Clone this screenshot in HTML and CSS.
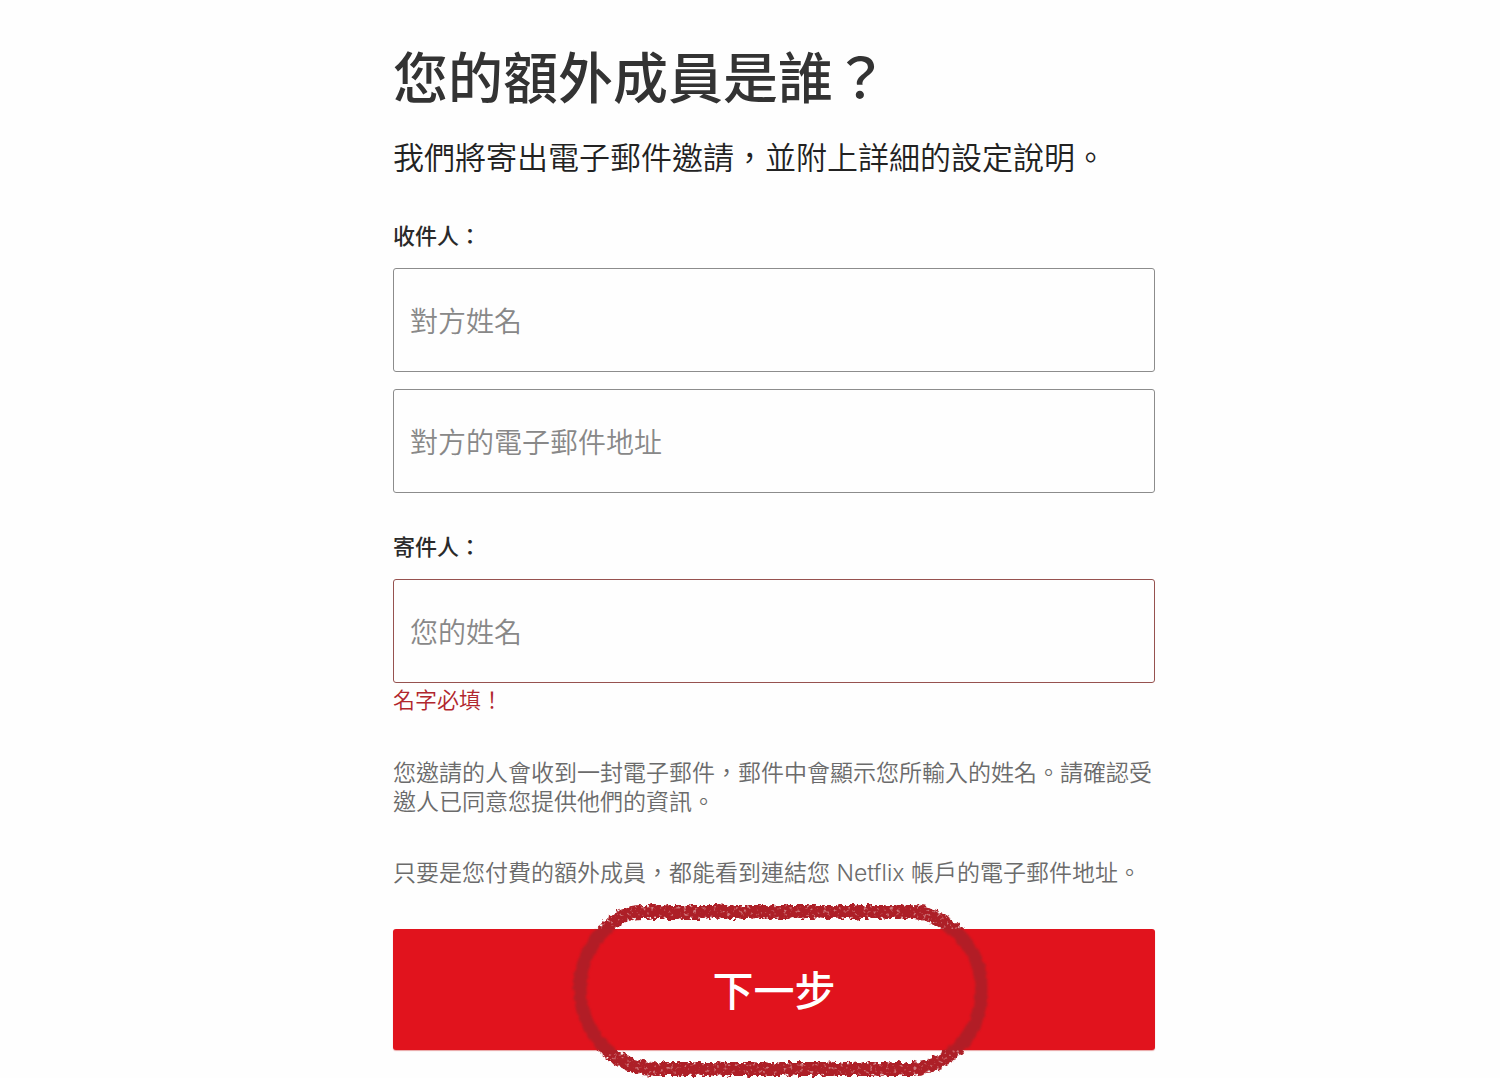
FILE: index.html
```html
<!DOCTYPE html>
<html lang="zh-Hant">
<head>
<meta charset="utf-8">
<meta name="viewport" content="width=device-width, initial-scale=1">
<title>您的額外成員是誰？</title>
<link rel="stylesheet" href="styles.css">
</head>
<body>
<main class="page">
  <form class="invite" novalidate>
    <h1 class="title">您的額外成員是誰？</h1>
    <p class="subtitle">我們將寄出電子郵件邀請，並附上詳細的設定說明。</p>

    <section class="group">
      <label class="group-label" for="to-name">收件人：</label>
      <input class="field" id="to-name" type="text" placeholder="對方姓名">
      <input class="field" type="email" placeholder="對方的電子郵件地址" aria-label="對方的電子郵件地址">
    </section>

    <section class="group">
      <label class="group-label" for="from-name">寄件人：</label>
      <input class="field field-invalid" id="from-name" type="text" placeholder="您的姓名" aria-invalid="true" aria-describedby="from-error">
    </section>
    <p class="error" id="from-error">名字必填！</p>

    <p class="note">您邀請的人會收到一封電子郵件，郵件中會顯示您所輸入的姓名。請確認受邀人已同意您提供他們的資訊。</p>
    <p class="note">只要是您付費的額外成員，都能看到連結您 Netflix 帳戶的電子郵件地址。</p>

    <div class="action">
      <button class="next" type="button">下一步</button>
      <svg class="marker" viewBox="0 0 430 181" aria-hidden="true">
        <defs>
          <path id="ring" d="M73 15H346C362 16 370 20 378 26C404 44 414 66 414 90C414 114 409 136 386 155C374 165 364 170 346 172H85C66 171 54 165 40 153C22 136 13 114 13 90C13 66 24 42 46 26C54 19 60 16 73 15Z"/>
          <clipPath id="on-button"><rect x="0" y="32" width="430" height="121"/></clipPath>
          <clipPath id="off-button"><path d="M0 0H430V32H0ZM0 153H430V181H0Z"/></clipPath>
          <filter id="crayon" filterUnits="userSpaceOnUse" x="0" y="0" width="430" height="181" color-interpolation-filters="sRGB">
            <feTurbulence type="fractalNoise" baseFrequency="0.2" numOctaves="2" seed="7" result="noise"/>
            <feDisplacementMap in="SourceGraphic" in2="noise" scale="8" xChannelSelector="R" yChannelSelector="G" result="rough"/>
            <feTurbulence type="fractalNoise" baseFrequency="0.3" numOctaves="2" seed="21" result="grain"/>
            <feColorMatrix in="grain" type="matrix" values="0 0 0 0 0  0 0 0 0 0  0 0 0 0 0  0 5 0 0 -1.1" result="mask"/>
            <feComposite in="rough" in2="mask" operator="in"/>
            <feGaussianBlur stdDeviation="0.4"/>
          </filter>
          <filter id="soft" filterUnits="userSpaceOnUse" x="0" y="0" width="430" height="181" color-interpolation-filters="sRGB">
            <feTurbulence type="fractalNoise" baseFrequency="0.18" numOctaves="1" seed="4" result="noise"/>
            <feDisplacementMap in="SourceGraphic" in2="noise" scale="5" xChannelSelector="R" yChannelSelector="G"/>
            <feGaussianBlur stdDeviation="1"/>
          </filter>
        </defs>
        <g clip-path="url(#on-button)"><use class="stroke-soft" href="#ring" filter="url(#soft)"/></g>
        <g clip-path="url(#off-button)">
          <use class="stroke-base" href="#ring"/>
          <use class="stroke-grain" href="#ring" filter="url(#crayon)"/>
        </g>
      </svg>
    </div>
  </form>
</main>
</body>
</html>
```
FILE: styles.css
```css
* {
  box-sizing: border-box;
}

body {
  margin: 0;
  background: #fefefe;
  color: #333;
  font-family: "Noto Sans CJK TC", sans-serif;
}

.page {
  display: flex;
  justify-content: center;
  padding: 38px 0 28px 48px;
}

.invite {
  width: 100%;
  max-width: 762px;
}

.title {
  margin: 0;
  font-size: 55px;
  font-weight: 500;
  line-height: 72px;
}

.subtitle {
  margin: 22px 0 39px;
  color: #222;
  font-size: 31px;
  font-weight: 350;
  line-height: 48px;
}

.group {
  display: flex;
  flex-direction: column;
  gap: 17px;
}

.group + .group {
  margin-top: 37px;
}

.group-label {
  margin-bottom: 2px;
  color: #2a2a2a;
  font-size: 22px;
  font-weight: 500;
  line-height: 30px;
}

.field {
  width: 100%;
  height: 104px;
  padding: 0 16px;
  border: 1px solid #8c8c8c;
  border-radius: 3px;
  background: #fefefe;
  color: #333;
  font-family: inherit;
  font-size: 28px;
  font-weight: 350;
}

.field::placeholder {
  color: #888;
  opacity: 1;
}

.field-invalid {
  border-color: #96524f;
}

.error {
  margin: 0;
  color: #b1262d;
  font-size: 22px;
  font-weight: 350;
  line-height: 30px;
}

.note {
  margin: 42px 0 0;
  color: #6b6b6b;
  font-family: Inter, "Noto Sans CJK TC", sans-serif;
  font-size: 23px;
  font-weight: 350;
  line-height: 29px;
}

.error + .note {
  margin-top: 46px;
}

.action {
  position: relative;
  margin-top: 41px;
}

.next {
  display: block;
  width: 100%;
  height: 121px;
  padding: 0 0 4px;
  border: 0;
  border-radius: 3px;
  background: #e1131d;
  box-shadow: 0 1px 1px #e9a5a5;
  color: #fff;
  font-family: inherit;
  font-size: 41px;
  font-weight: 500;
}

.marker {
  position: absolute;
  top: -32px;
  left: 50%;
  width: 430px;
  height: 181px;
  margin-left: -207px;
  pointer-events: none;
}

.stroke-soft,
.stroke-base,
.stroke-grain {
  fill: none;
  stroke: #ad1f27;
}

.stroke-soft {
  stroke-width: 13px;
  opacity: 0.9;
}

.stroke-base {
  stroke-width: 10px;
  opacity: 0.6;
}

.stroke-grain {
  stroke-width: 14px;
}
```
